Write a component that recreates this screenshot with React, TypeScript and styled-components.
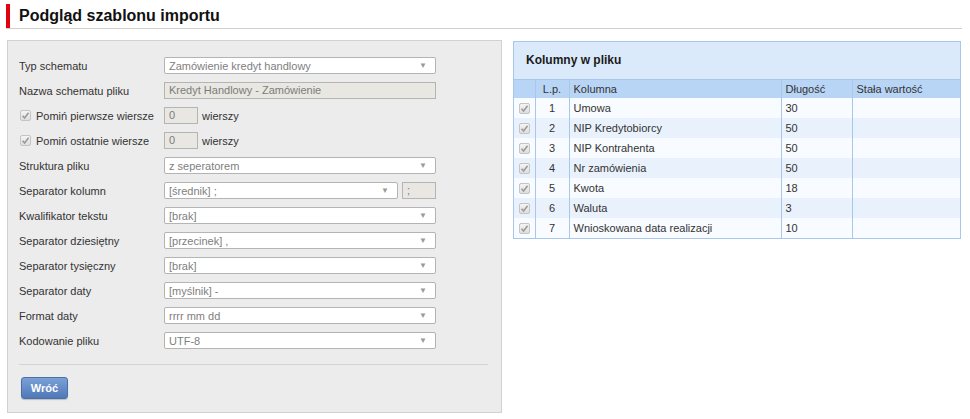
import React from "react";
import styled, { createGlobalStyle } from "styled-components";

const GlobalStyle = createGlobalStyle`
  body {
    margin: 0;
    background: #fff;
    font-family: "Liberation Sans", Arial, sans-serif;
    color: #333;
  }
`;

type Field =
  | { kind: "select"; label: string; value: string }
  | { kind: "text"; label: string; value: string }
  | { kind: "skip"; label: string; value: string }
  | { kind: "selectExtra"; label: string; value: string; extra: string };

const fields: Field[] = [
  { kind: "select", label: "Typ schematu", value: "Zamówienie kredyt handlowy" },
  { kind: "text", label: "Nazwa schematu pliku", value: "Kredyt Handlowy - Zamówienie" },
  { kind: "skip", label: "Pomiń pierwsze wiersze", value: "0" },
  { kind: "skip", label: "Pomiń ostatnie wiersze", value: "0" },
  { kind: "select", label: "Struktura pliku", value: "z seperatorem" },
  { kind: "selectExtra", label: "Separator kolumn", value: "[średnik] ;", extra: ";" },
  { kind: "select", label: "Kwalifikator tekstu", value: "[brak]" },
  { kind: "select", label: "Separator dziesiętny", value: "[przecinek] ," },
  { kind: "select", label: "Separator tysięczny", value: "[brak]" },
  { kind: "select", label: "Separator daty", value: "[myślnik] -" },
  { kind: "select", label: "Format daty", value: "rrrr mm dd" },
  { kind: "select", label: "Kodowanie pliku", value: "UTF-8" },
];

const columns = [
  { lp: 1, name: "Umowa", len: 30 },
  { lp: 2, name: "NIP Kredytobiorcy", len: 50 },
  { lp: 3, name: "NIP Kontrahenta", len: 50 },
  { lp: 4, name: "Nr zamówienia", len: 50 },
  { lp: 5, name: "Kwota", len: 18 },
  { lp: 6, name: "Waluta", len: 3 },
  { lp: 7, name: "Wnioskowana data realizacji", len: 10 },
];

const Check = () => (
  <CheckBox>
    <svg width="9" height="9" viewBox="0 0 9 9">
      <path d="M1.5 4.8 L3.6 7 L7.6 1.8" fill="none" stroke="#9a9a9a" strokeWidth="1.6" />
    </svg>
  </CheckBox>
);

const Select = ({ value, width }: { value: string; width?: number }) => (
  <SelectBox $width={width}>
    <span>{value}</span>
    <Arrow>▼</Arrow>
  </SelectBox>
);

export default function App() {
  return (
    <>
      <GlobalStyle />
      <Page>
        <Header>
          <Title>Podgląd szablonu importu</Title>
        </Header>
        <Content>
          <FormPanel>
            {fields.map((f) => (
              <Row key={f.label}>
                {f.kind === "skip" ? (
                  <Label>
                    <Check />
                    <CheckText>{f.label}</CheckText>
                  </Label>
                ) : (
                  <Label>{f.label}</Label>
                )}
                {f.kind === "select" && <Select value={f.value} />}
                {f.kind === "text" && <TextBox $width={272}>{f.value}</TextBox>}
                {f.kind === "skip" && (
                  <>
                    <TextBox $width={34}>{f.value}</TextBox>
                    <Unit>wierszy</Unit>
                  </>
                )}
                {f.kind === "selectExtra" && (
                  <>
                    <Select value={f.value} width={234} />
                    <TextBox $width={34} $gap={4}>{f.extra}</TextBox>
                  </>
                )}
              </Row>
            ))}
            <Divider />
            <Button>Wróć</Button>
          </FormPanel>

          <TablePanel>
            <PanelHead>Kolumny w pliku</PanelHead>
            <Table>
              <colgroup>
                <col style={{ width: 21 }} />
                <col style={{ width: 34 }} />
                <col style={{ width: 212 }} />
                <col style={{ width: 71 }} />
                <col />
              </colgroup>
              <thead>
                <tr>
                  <Th />
                  <Th $center>L.p.</Th>
                  <Th>Kolumna</Th>
                  <Th>Długość</Th>
                  <Th>Stała wartość</Th>
                </tr>
              </thead>
              <tbody>
                {columns.map((c, i) => (
                  <Tr key={c.lp} $odd={i % 2 === 1}>
                    <Td $center>
                      <Check />
                    </Td>
                    <Td $center>{c.lp}</Td>
                    <Td>{c.name}</Td>
                    <Td>{c.len}</Td>
                    <Td />
                  </Tr>
                ))}
              </tbody>
            </Table>
          </TablePanel>
        </Content>
      </Page>
    </>
  );
}

// STYLED COMPONENTS //
const Page = styled.div`
  padding: 4px 8px 0 6px;
  font-size: 11px;
`;

const Header = styled.div`
  border-bottom: 1px solid #cfcfcf;
`;

const Title = styled.h1`
  margin: 0;
  height: 24px;
  line-height: 24px;
  border-left: 4px solid #e2000f;
  padding-left: 9px;
  font-size: 16px;
  font-weight: bold;
  color: #111;
`;

const Content = styled.div`
  display: flex;
  align-items: flex-start;
  gap: 11px;
  margin-top: 11px;
  padding-left: 1px;
`;

const FormPanel = styled.div`
  width: 495px;
  box-sizing: border-box;
  background: #ececec;
  border: 1px solid #d2d2d2;
  padding: 12px 13px 13px 11px;
`;

const Row = styled.div`
  display: flex;
  align-items: center;
  height: 25px;
`;

const Label = styled.div`
  width: 145px;
  display: flex;
  align-items: center;
  color: #333;
`;

const CheckText = styled.span`
  margin-left: 5px;
`;

const CheckBox = styled.span`
  display: inline-flex;
  align-items: center;
  justify-content: center;
  width: 11px;
  height: 11px;
  box-sizing: border-box;
  border: 1px solid #c4c4c4;
  border-radius: 2px;
  background: linear-gradient(#f4f4f4, #dedede);
  margin-left: 1px;
  vertical-align: middle;
`;

const SelectBox = styled.div<{ $width?: number }>`
  width: ${(p) => p.$width ?? 272}px;
  height: 17px;
  box-sizing: border-box;
  border: 1px solid #b4b4b4;
  border-radius: 2px;
  background: #fff;
  color: #808080;
  padding: 0 8px 0 4px;
  display: flex;
  align-items: center;
  justify-content: space-between;
  white-space: nowrap;
`;

const Arrow = styled.span`
  font-size: 8px;
  color: #9a9a9a;
`;

const TextBox = styled.div<{ $width: number; $gap?: number }>`
  width: ${(p) => p.$width}px;
  height: 17px;
  box-sizing: border-box;
  margin-left: ${(p) => p.$gap ?? 0}px;
  border: 1px solid #b4b4b4;
  background: #e8e7e1;
  color: #7c7c7c;
  padding: 0 4px;
  line-height: 15px;
  white-space: nowrap;
`;

const Unit = styled.span`
  margin-left: 4px;
  color: #333;
`;

const Divider = styled.div`
  height: 1px;
  background: #d4d4d4;
  margin-top: 11px;
`;

const Button = styled.button`
  margin: 12px 0 0 2px;
  width: 47px;
  height: 22px;
  border: 1px solid #4a70a8;
  border-radius: 3px;
  background: linear-gradient(#7aa0d6, #5079b8);
  color: #fff;
  font-family: "Liberation Sans", Arial, sans-serif;
  font-size: 11px;
  font-weight: bold;
  padding: 0;
  box-shadow: 0 1px 1px rgba(0, 0, 0, 0.2);
`;

const TablePanel = styled.div`
  width: 448px;
  box-sizing: border-box;
  border: 1px solid #a9c7ea;
  margin-top: 1px;
`;

const PanelHead = styled.div`
  height: 37px;
  line-height: 37px;
  background: #dbeafb;
  padding-left: 12px;
  font-size: 12px;
  font-weight: bold;
  color: #1a1a1a;
  border-bottom: 1px solid #a9c7ea;
`;

const Table = styled.table`
  width: 100%;
  border-collapse: collapse;
  table-layout: fixed;
`;

const Th = styled.th<{ $center?: boolean }>`
  height: 18px;
  padding: 0 4px;
  background: #b9d5f6;
  font-weight: normal;
  text-align: ${(p) => (p.$center ? "center" : "left")};
  color: #333;
  border-left: 1px solid #a9c7ea;
  &:first-child {
    border-left: none;
  }
`;

const Tr = styled.tr<{ $odd: boolean }>`
  background: ${(p) => (p.$odd ? "#e9f2fc" : "#f8fbff")};
`;

const Td = styled.td<{ $center?: boolean }>`
  height: 20px;
  padding: 0 4px;
  text-align: ${(p) => (p.$center ? "center" : "left")};
  color: #333;
  border-left: 1px solid #a9c7ea;
  &:first-child {
    border-left: none;
  }
`;
